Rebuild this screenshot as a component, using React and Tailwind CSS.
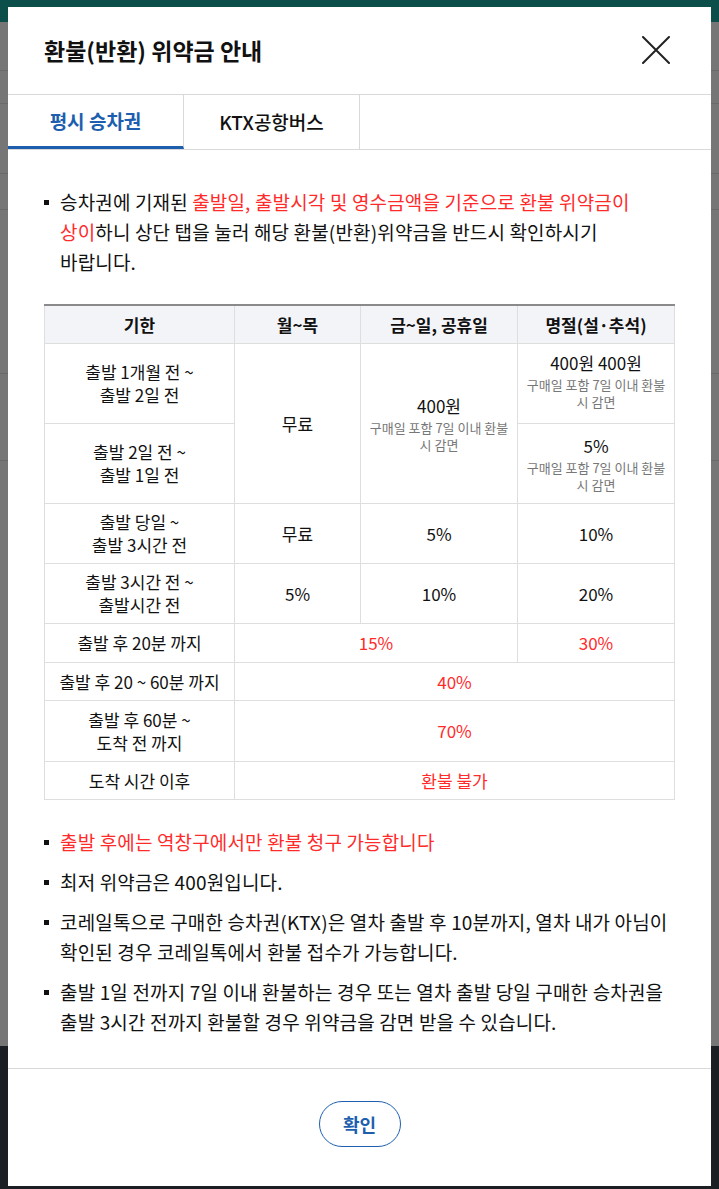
const FONT = "font-['Noto_Sans_CJK_KR','Noto_Sans',sans-serif]";

function Bullet({ children, className = '' }) {
  return (
    <li className={`relative pl-4 ${className}`}>
      <span className="absolute left-0 top-[13px] h-[5px] w-[5px] bg-[#111]" />
      {children}
    </li>
  );
}

function Note({ children }) {
  return <p className="mt-[2px] text-[13px] leading-[17px] text-[#777]">{children}</p>;
}

const td = 'border border-[#dedede] text-center align-middle';

export default function App() {
  return (
    <div className={`relative h-[1189px] w-[719px] overflow-hidden bg-[#767676] ${FONT}`}>
      {/* dimmed page behind */}
      <div className="h-[22px] bg-[#0c4e49]" />
      <div className="flex h-[1024px] flex-col bg-[#767676]">
        <div className="mt-[48px] h-px bg-[#6a6a6a]" />
        <div className="mt-[32px] h-px bg-[#6a6a6a]" />
        <div className="mt-[69px] h-px bg-[#6a6a6a]" />
        <div className="mt-[35px] h-px bg-[#6a6a6a]" />
        <div className="mt-[163px] h-px bg-[#6a6a6a]" />
        <div className="mt-[86px] h-px bg-[#6a6a6a]" />
      </div>
      <div className="h-[143px] bg-[#1b1e22]" />

      {/* modal */}
      <div className="absolute left-[8px] top-[7px] flex h-[1179px] w-[703px] flex-col bg-white text-[#111]">
        <div className="flex h-[87px] items-center justify-between pl-[36px] pr-[41px]">
          <h1 className="text-[23px] font-bold">환불(반환) 위약금 안내</h1>
          <svg width="28" height="28" viewBox="0 0 28 28" className="mt-[-2px]">
            <path d="M1 1 L27 27 M27 1 L1 27" stroke="#222" strokeWidth="2" strokeLinecap="round" />
          </svg>
        </div>

        <div className="flex h-[56px] border-y border-[#d9d9d9]">
          <div className="flex w-[176px] items-center justify-center border-b-[3px] border-r border-r-[#d9d9d9] border-b-[#1d5fae] pt-[2px] text-[19px] font-bold text-[#1d5fae]">
            평시 승차권
          </div>
          <div className="flex w-[176px] items-center justify-center border-r border-[#d9d9d9] text-[19px] font-medium">
            KTX공항버스
          </div>
        </div>

        <div className="flex-1 px-[36px] pt-[37px]">
          <ul className="break-keep text-[19px] leading-[30px] tracking-[0.15px]">
            <Bullet>
              승차권에 기재된{' '}
              <span className="text-[#ff2b2b]">출발일, 출발시각 및 영수금액을 기준으로 환불 위약금이 상이</span>
              하니 상단 탭을 눌러 해당 환불(반환)위약금을 반드시 확인하시기 바랍니다.
            </Bullet>
          </ul>

          <table className="mt-[27px] w-full border-collapse border-t-2 border-t-[#8a8a8a] text-[17px] leading-[23px]">
            <colgroup>
              <col className="w-[190px]" />
              <col className="w-[126px]" />
              <col className="w-[157px]" />
              <col />
            </colgroup>
            <thead>
              <tr className="h-[38px] bg-[#f3f4f8] font-bold">
                <th className={td}>기한</th>
                <th className={td}>월~목</th>
                <th className={td}>금~일, 공휴일</th>
                <th className={td}>명절(설·추석)</th>
              </tr>
            </thead>
            <tbody>
              <tr className="h-[80px]">
                <td className={td}>출발 1개월 전 ~<br />출발 2일 전</td>
                <td className={td} rowSpan={2}>무료</td>
                <td className={`${td} px-1`} rowSpan={2}>
                  <p>400원</p>
                  <Note>구매일 포함 7일 이내 환불<br />시 감면</Note>
                </td>
                <td className={`${td} px-1 pb-[6px]`}>
                  <p>400원 400원</p>
                  <Note>구매일 포함 7일 이내 환불<br />시 감면</Note>
                </td>
              </tr>
              <tr className="h-[80px]">
                <td className={td}>출발 2일 전 ~<br />출발 1일 전</td>
                <td className={`${td} px-1`}>
                  <p>5%</p>
                  <Note>구매일 포함 7일 이내 환불<br />시 감면</Note>
                </td>
              </tr>
              <tr className="h-[60px]">
                <td className={td}>출발 당일 ~<br />출발 3시간 전</td>
                <td className={td}>무료</td>
                <td className={td}>5%</td>
                <td className={td}>10%</td>
              </tr>
              <tr className="h-[60px]">
                <td className={td}>출발 3시간 전 ~<br />출발시간 전</td>
                <td className={td}>5%</td>
                <td className={td}>10%</td>
                <td className={td}>20%</td>
              </tr>
              <tr className="h-[39px]">
                <td className={td}>출발 후 20분 까지</td>
                <td className={`${td} text-[#ff2b2b]`} colSpan={2}>15%</td>
                <td className={`${td} text-[#ff2b2b]`}>30%</td>
              </tr>
              <tr className="h-[38px]">
                <td className={td}>출발 후 20 ~ 60분 까지</td>
                <td className={`${td} text-[#ff2b2b]`} colSpan={3}>40%</td>
              </tr>
              <tr className="h-[61px]">
                <td className={td}>출발 후 60분 ~<br />도착 전 까지</td>
                <td className={`${td} text-[#ff2b2b]`} colSpan={3}>70%</td>
              </tr>
              <tr className="h-[38px]">
                <td className={td}>도착 시간 이후</td>
                <td className={`${td} text-[#ff2b2b]`} colSpan={3}>환불 불가</td>
              </tr>
            </tbody>
          </table>

          <ul className="mt-[27px] flex flex-col gap-[10px] break-keep text-[19px] leading-[30px] tracking-[0.15px]">
            <Bullet className="text-[#ff2b2b]">출발 후에는 역창구에서만 환불 청구 가능합니다</Bullet>
            <Bullet>최저 위약금은 400원입니다.</Bullet>
            <Bullet>
              코레일톡으로 구매한 승차권(KTX)은 열차 출발 후 10분까지, 열차 내가 아님이 확인된 경우 코레일톡에서 환불 접수가 가능합니다.
            </Bullet>
            <Bullet>
              출발 1일 전까지 7일 이내 환불하는 경우 또는 열차 출발 당일 구매한 승차권을 출발 3시간 전까지 환불할 경우 위약금을 감면 받을 수 있습니다.
            </Bullet>
          </ul>
        </div>

        <div className="flex h-[118px] justify-center border-t border-[#d9d9d9] pt-[32px]">
          <button className="h-[46px] w-[82px] rounded-full border border-[#1d5fae] text-[18px] font-bold text-[#1d5fae]">
            확인
          </button>
        </div>
      </div>
    </div>
  );
}
